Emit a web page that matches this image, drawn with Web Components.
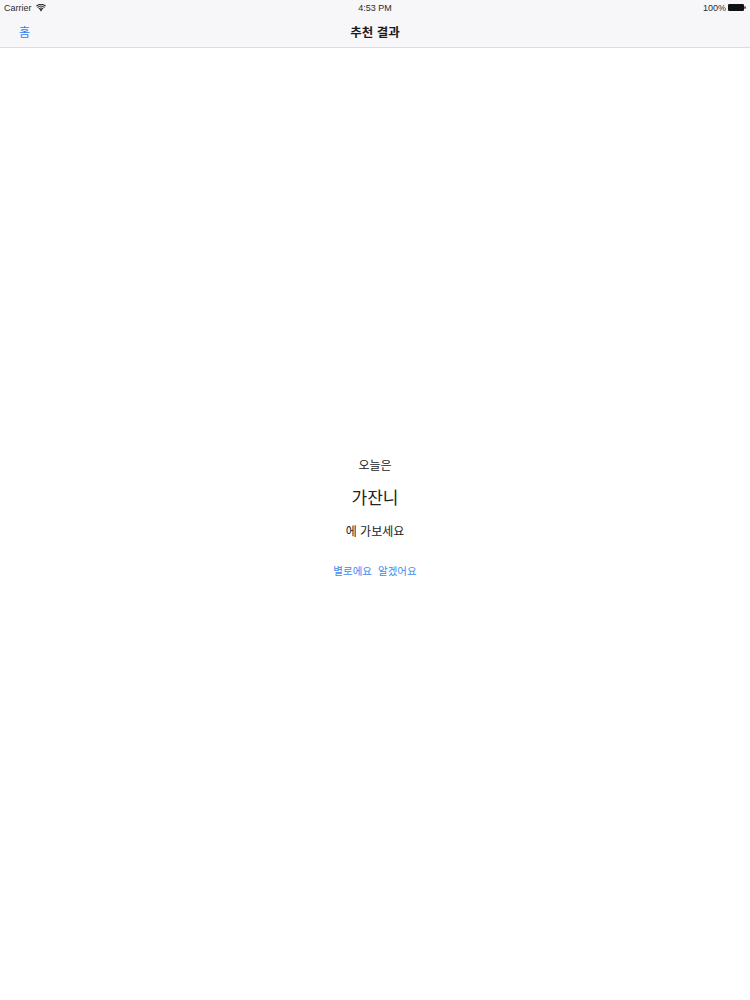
<!DOCTYPE html>
<html lang="ko">
<head>
<meta charset="utf-8">
<title>추천 결과</title>
<style>
  html, body { margin: 0; height: 100%; background: #fff; }
  body { font-family: "Noto Sans CJK KR", "Liberation Sans", sans-serif; }
</style>
</head>
<body>
<result-page></result-page>

<script>
const FONT = `"Liberation Sans", "Noto Sans CJK KR", sans-serif`

class StatusBar extends HTMLElement {
  constructor() {
    super()
    this.attachShadow({ mode: "open" })
    this.shadowRoot.innerHTML = `
      <style>
        :host {
          display: grid;
          grid-template-columns: 1fr auto 1fr;
          align-items: center;
          height: 15px;
          padding: 0 4px;
          font: 9px ${FONT};
          color: #2c2c2e;
        }
        .left { display: flex; align-items: center; gap: 4px; }
        .right { display: flex; align-items: center; justify-content: flex-end; gap: 2px; }
        svg { display: block; }
      </style>
      <div class="left">
        <span>Carrier</span>
        <svg width="10" height="8" viewBox="0 0 10 8">
          <path d="M5 7.6 3.4 5.6a2.6 2.6 0 0 1 3.2 0z" fill="#222"/>
          <path d="M2.5 4.6a4 4 0 0 1 5 0l-.6.7a3.1 3.1 0 0 0-3.8 0z" fill="#222"/>
          <path d="M1.2 3.1a6.1 6.1 0 0 1 7.6 0l-.6.8a5.1 5.1 0 0 0-6.4 0z" fill="#222"/>
          <path d="M0 1.7a8 8 0 0 1 10 0l-.6.8a7 7 0 0 0-8.8 0z" fill="#222"/>
        </svg>
      </div>
      <div>4:53 PM</div>
      <div class="right">
        <span>100%</span>
        <svg width="18" height="7" viewBox="0 0 18 7">
          <rect x="0" y="0" width="16" height="7" rx="1.2" fill="#111"/>
          <rect x="16.4" y="2.2" width="1.3" height="2.6" rx=".5" fill="#111"/>
        </svg>
      </div>
    `
  }
}

class NavBar extends HTMLElement {
  constructor() {
    super()
    this.attachShadow({ mode: "open" })
    this.shadowRoot.innerHTML = `
      <style>
        :host {
          display: grid;
          grid-template-columns: 1fr auto 1fr;
          align-items: center;
          height: 32px;
          padding: 0 19px;
          font-family: ${FONT};
        }
        .back { font-size: 12px; color: #2f7cf6; }
        .title { font-size: 12.5px; font-weight: 700; color: #1c1c1e; }
      </style>
      <div class="back"><slot name="back"></slot></div>
      <div class="title"><slot name="title"></slot></div>
      <div></div>
    `
  }
}

class LinkButton extends HTMLElement {
  constructor() {
    super()
    this.attachShadow({ mode: "open" })
    this.shadowRoot.innerHTML = `
      <style>
        :host {
          display: inline-block;
          font-size: 10.5px;
          line-height: 14px;
          color: #3d8af0;
          cursor: pointer;
        }
      </style>
      <slot></slot>
    `
  }
}

class RecommendResult extends HTMLElement {
  constructor() {
    super()
    this.attachShadow({ mode: "open" })
    this.shadowRoot.innerHTML = `
      <style>
        :host {
          display: flex;
          flex-direction: column;
          align-items: center;
          padding-top: 410px;
          font-family: ${FONT};
          color: #222;
        }
        .small { font-size: 12px; line-height: 16px; }
        .place { font-size: 17px; line-height: 24px; margin-top: 13px; }
        .tail { margin-top: 13px; }
        .actions { display: flex; gap: 6px; margin-top: 24px; }
      </style>
      <div class="small"><slot name="before"></slot></div>
      <div class="place"><slot name="place"></slot></div>
      <div class="small tail"><slot name="after"></slot></div>
      <div class="actions"><slot name="actions"></slot></div>
    `
  }
}

class ResultPage extends HTMLElement {
  constructor() {
    super()
    this.attachShadow({ mode: "open" })
    this.shadowRoot.innerHTML = `
      <style>
        :host { display: block; min-height: 1000px; background: #fff; }
        header {
          background: #f7f6f9;
          border-bottom: 1px solid #dcdcde;
        }
      </style>
      <header>
        <status-bar></status-bar>
        <nav-bar>
          <span slot="back">홈</span>
          <span slot="title">추천 결과</span>
        </nav-bar>
      </header>
      <recommend-result>
        <span slot="before">오늘은</span>
        <span slot="place">가잔니</span>
        <span slot="after">에 가보세요</span>
        <link-button slot="actions">별로에요</link-button>
        <link-button slot="actions">알겠어요</link-button>
      </recommend-result>
    `
  }
}

customElements.define("status-bar", StatusBar)
customElements.define("nav-bar", NavBar)
customElements.define("link-button", LinkButton)
customElements.define("recommend-result", RecommendResult)
customElements.define("result-page", ResultPage)
</script>
</body>
</html>
